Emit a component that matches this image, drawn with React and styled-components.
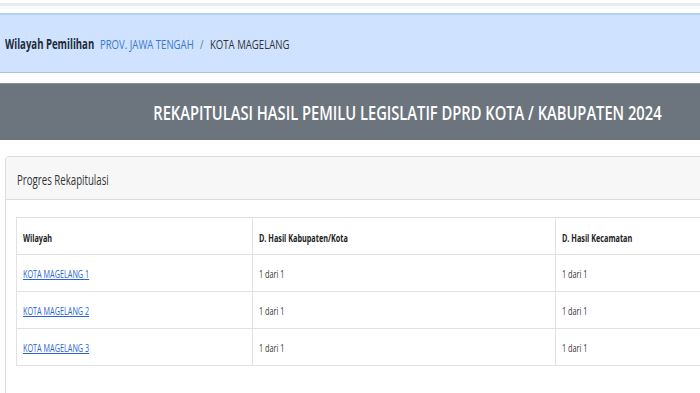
import React from "react";
import styled, { createGlobalStyle } from "styled-components";

const GlobalStyle = createGlobalStyle`
  body {
    margin: 0;
    background: #fff;
    font-family: "Open Sans", "Noto Sans", sans-serif;
    color: #212529;
    overflow: hidden;
  }
`;

const rows = [
  { name: "KOTA MAGELANG 1", kab: "1 dari 1", kec: "1 dari 1" },
  { name: "KOTA MAGELANG 2", kab: "1 dari 1", kec: "1 dari 1" },
  { name: "KOTA MAGELANG 3", kab: "1 dari 1", kec: "1 dari 1" },
];

const App = () => {
  return (
    <Page>
      <GlobalStyle />
      <TopStrip />
      <Breadcrumb>
        <Narrow $x={0.71}>
          <Label>Wilayah Pemilihan</Label>
          <Crumb href="#">PROV. JAWA TENGAH</Crumb>
          <Sep>/</Sep>
          <Current>KOTA MAGELANG</Current>
        </Narrow>
      </Breadcrumb>
      <Banner>
        <Narrow $x={0.735} $origin="right">
          REKAPITULASI HASIL PEMILU LEGISLATIF DPRD KOTA / KABUPATEN 2024
        </Narrow>
      </Banner>
      <Card>
        <CardHeader>
          <Narrow $x={0.69}>Progres Rekapitulasi</Narrow>
        </CardHeader>
        <CardBody>
          <Table>
            <colgroup>
              <col style={{ width: 236 }} />
              <col style={{ width: 303 }} />
              <col />
            </colgroup>
            <thead>
              <tr>
                <Th>
                  <Narrow>Wilayah</Narrow>
                </Th>
                <Th>
                  <Narrow>D. Hasil Kabupaten/Kota</Narrow>
                </Th>
                <Th>
                  <Narrow>D. Hasil Kecamatan</Narrow>
                </Th>
              </tr>
            </thead>
            <tbody>
              {rows.map((r, i) => (
                <tr key={i}>
                  <Td>
                    <RowLink href="#">{r.name}</RowLink>
                  </Td>
                  <Td>
                    <Narrow>{r.kab}</Narrow>
                  </Td>
                  <Td>
                    <Narrow>{r.kec}</Narrow>
                  </Td>
                </tr>
              ))}
            </tbody>
          </Table>
        </CardBody>
      </Card>
    </Page>
  );
};

export default App;

const Page = styled.div`
  width: 700px;
  height: 393px;
  overflow: hidden;
`;

// the page text is a condensed face; squeeze Open Sans to match
const Narrow = styled.span`
  display: inline-block;
  white-space: nowrap;
  transform: scaleX(${(p) => p.$x || 0.66});
  transform-origin: ${(p) => p.$origin || "left"} center;
`;

const TopStrip = styled.div`
  height: 13px;
  box-sizing: border-box;
  border-top: 3px solid #fff;
  background: linear-gradient(#e9ecef 0 3px, #f8f9fa 3px 6px, #fff 6px);
`;

const Breadcrumb = styled.div`
  height: 60px;
  box-sizing: border-box;
  display: flex;
  align-items: center;
  padding: 1px 5px 0;
  background: #cfe2ff;
  border-top: 2px solid #b2cff5;
  border-bottom: 1px solid #a9c3e6;
  font-size: 13.5px;
`;

const Label = styled.span`
  font-weight: 700;
  color: #1c2a3a;
  margin-right: 8px;
`;

const Crumb = styled.a`
  color: #3a78c9;
  text-decoration: none;
`;

const Sep = styled.span`
  color: #6c757d;
  padding: 0 9px;
`;

const Current = styled.span`
  color: #333;
`;

const Banner = styled.div`
  margin-top: 10px;
  height: 56px;
  display: flex;
  align-items: center;
  justify-content: flex-end;
  padding-right: 38px;
  background: #6c757d;
  border-top: 1px solid #8a9299;
  color: #fff;
  font-size: 20px;
  font-weight: 600;
`;

const Card = styled.div`
  margin: 16px 0 0 5px;
  border: 1px solid #dcdcdc;
  border-right: none;
  border-radius: 4px 0 0 0;
  height: 260px;
`;

const CardHeader = styled.div`
  height: 43px;
  display: flex;
  align-items: center;
  padding: 2px 0 0 11px;
  box-sizing: border-box;
  background: #f7f7f7;
  border-bottom: 1px solid #dcdcdc;
  font-size: 14px;
  color: #333;
`;

const CardBody = styled.div`
  padding: 17px 0 0 10px;
`;

const Table = styled.table`
  width: 700px;
  table-layout: fixed;
  border-collapse: collapse;
  font-size: 11px;
`;

const Th = styled.th`
  height: 34px;
  text-align: left;
  padding: 2px 6px 0;
  font-weight: 700;
  color: #222;
  border: 1px solid #e2e2e2;
`;

const Td = styled.td`
  height: 35px;
  padding: 1px 6px 0;
  color: #333;
  border: 1px solid #e2e2e2;
`;

const RowLink = styled.a`
  display: inline-block;
  white-space: nowrap;
  transform: scaleX(0.66);
  transform-origin: left center;
  color: #2b63d6;
  text-decoration: underline;
`;
